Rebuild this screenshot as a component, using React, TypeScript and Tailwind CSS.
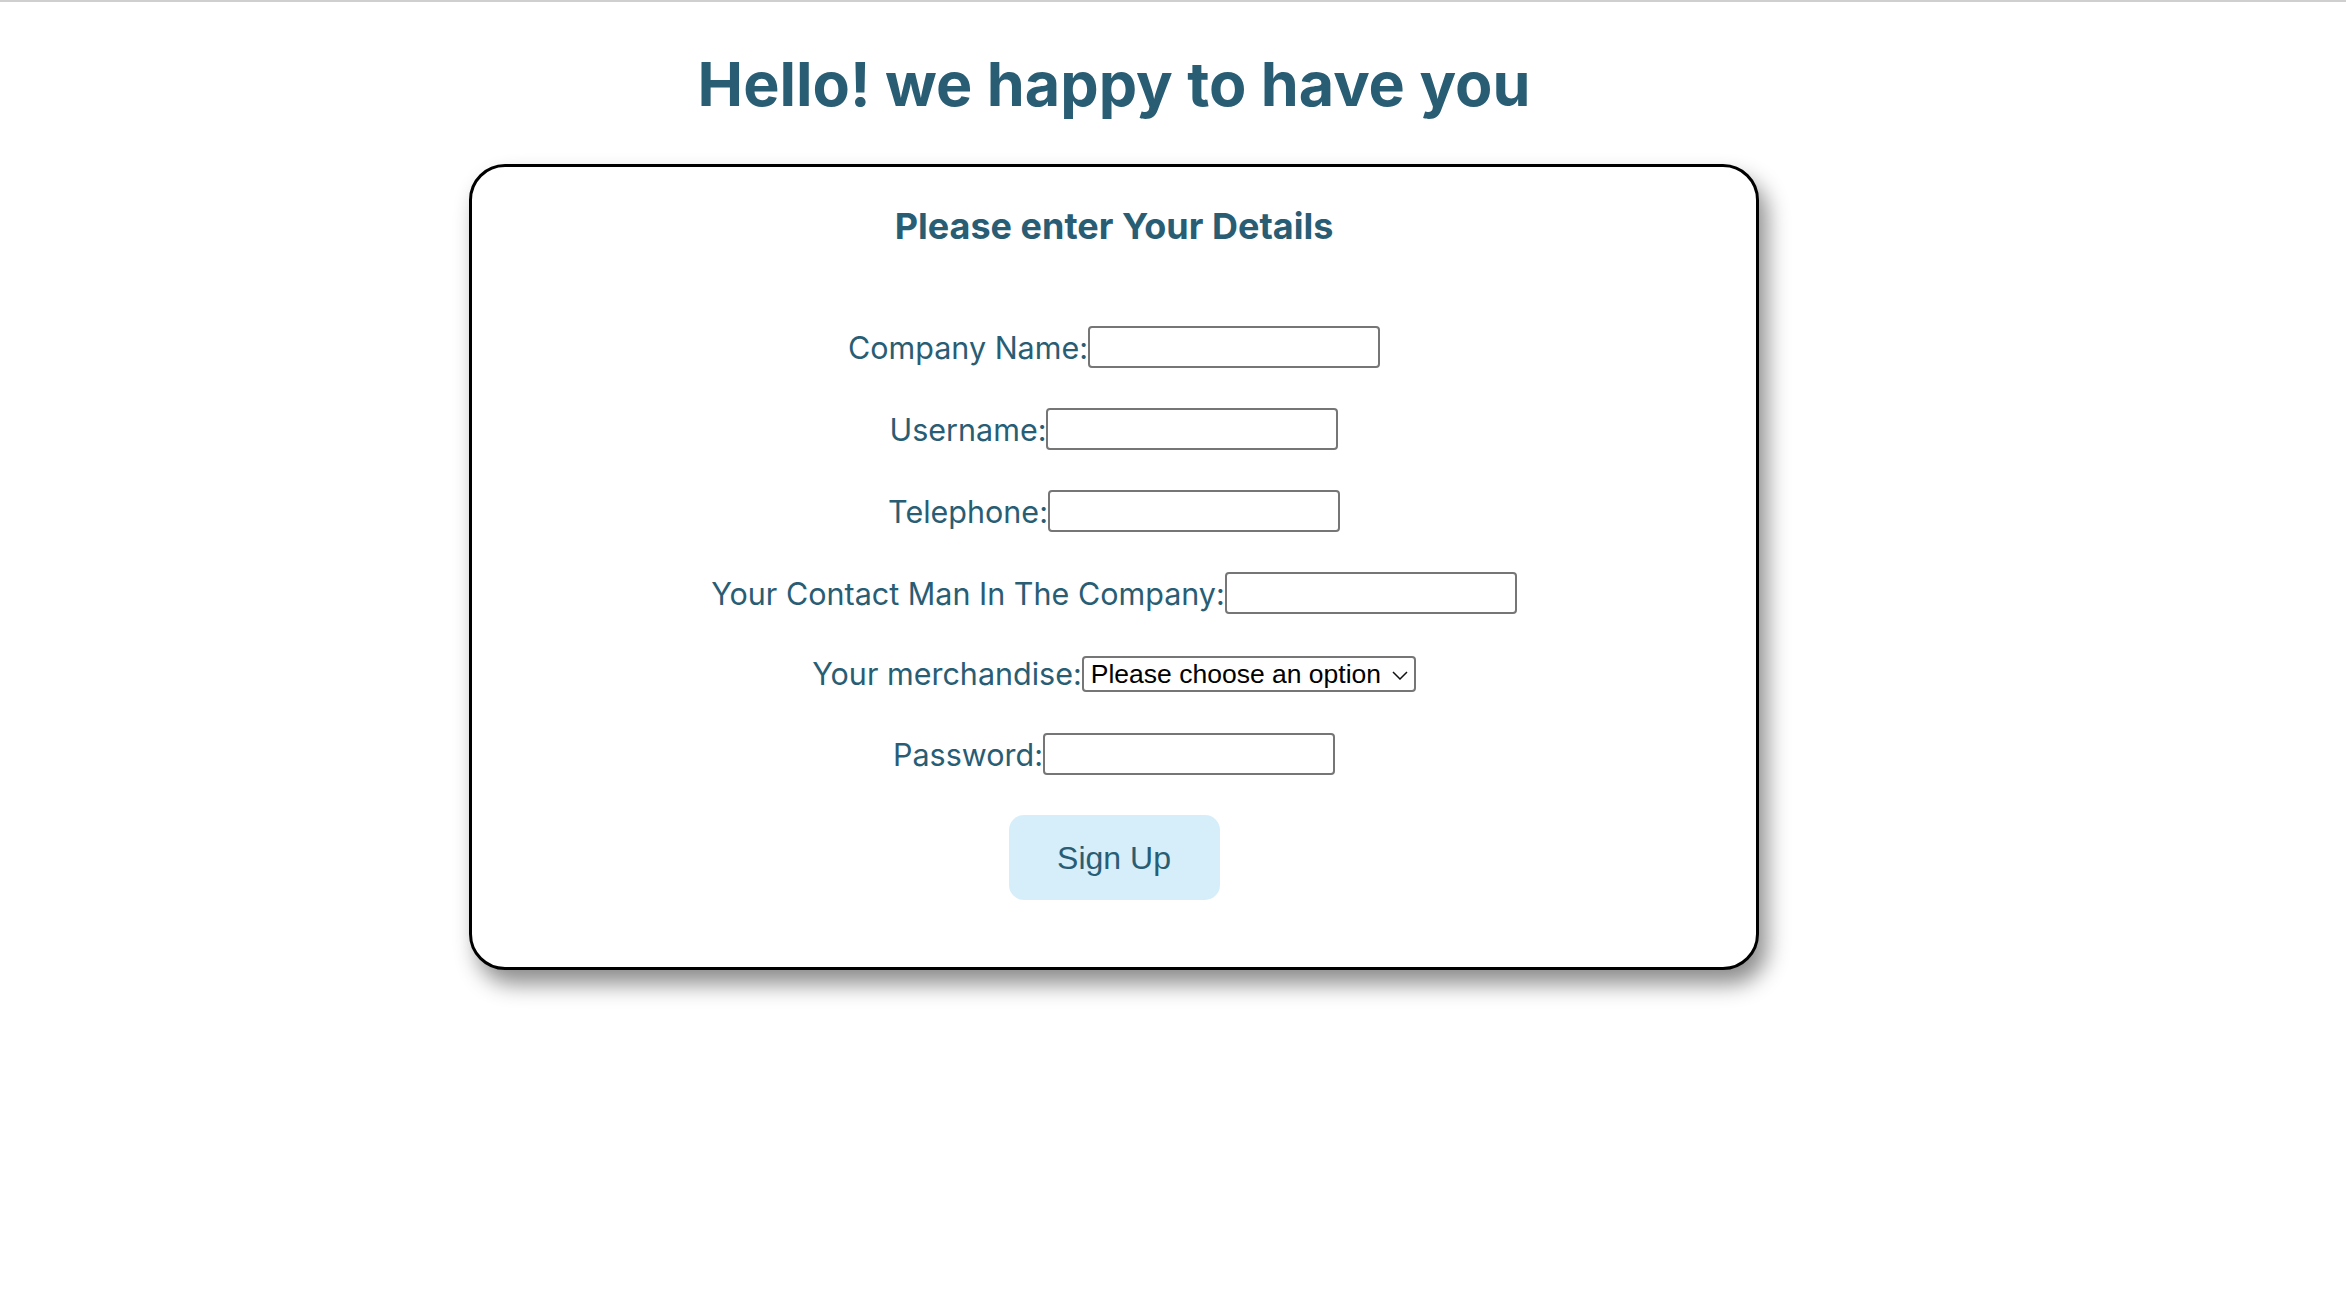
import React from 'react';

const labelClass = 'text-[30.5px] leading-[39px] text-[#295d74]';
const inputClass =
  'h-[42px] w-[292px] rounded-[4px] border-2 border-[#767676] bg-white px-2 font-["Liberation_Sans",Arial,sans-serif] text-[20px] text-black outline-none';

function Field({ label, type = 'text' }: { label: string; type?: string }) {
  return (
    <div className="flex items-center justify-center">
      <label className={labelClass}>{label}</label>
      <input type={type} className={inputClass} />
    </div>
  );
}

export default function App() {
  return (
    <div className="min-h-screen bg-white font-['Inter',sans-serif]">
      <div className="h-[2px] bg-[#cfcfcf]" />
      <div className="ml-[469px] w-[1290px] pt-[45px]">
        <h1 className="text-center text-[61px] font-bold leading-[75px] text-[#295d74]">
          Hello! we happy to have you
        </h1>

        <div className="mt-[42px] rounded-[36px] border-[3px] border-black bg-white pt-[37px] pb-[67px] shadow-[8px_14px_22px_rgba(0,0,0,0.45)]">
          <h2 className="text-center text-[36px] font-bold leading-[45px] text-[#295d74]">
            Please enter Your Details
          </h2>

          <form className="mt-[77px] flex flex-col items-center gap-[40px]">
            <Field label="Company Name:" />
            <Field label="Username:" />
            <Field label="Telephone:" type="tel" />
            <Field label="Your Contact Man In The Company:" />

            <div className="flex items-center justify-center">
              <label className={labelClass}>Your merchandise:</label>
              <div className="relative">
                <select className="h-[36px] w-[334px] appearance-none rounded-[4px] border-2 border-[#767676] bg-white pl-[7px] font-['Liberation_Sans',Arial,sans-serif] text-[26.5px] leading-[30px] text-black outline-none">
                  <option>Please choose an option</option>
                  <option>Electronics</option>
                  <option>Clothing</option>
                  <option>Food</option>
                </select>
                <svg
                  className="pointer-events-none absolute right-[8px] top-[15px]"
                  width="16"
                  height="9"
                  viewBox="0 0 16 9"
                  fill="none"
                >
                  <path d="M1 1l7 7 7-7" stroke="#111" strokeWidth="1.5" />
                </svg>
              </div>
            </div>

            <Field label="Password:" type="password" />

            <button
              type="button"
              className="h-[85px] w-[211px] rounded-[15px] bg-[#d6eefa] font-['Liberation_Sans',Arial,sans-serif] text-[32px] text-[#295d74]"
            >
              Sign Up
            </button>
          </form>
        </div>
      </div>
    </div>
  );
}
